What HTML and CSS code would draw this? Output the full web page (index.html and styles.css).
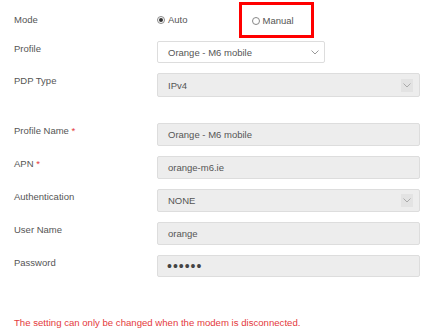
FILE: index.html
```html
<!DOCTYPE html>
<html>
<head>
<meta charset="utf-8">
<link rel="stylesheet" href="styles.css">
</head>
<body>
<div class="form">
  <div class="row mode-row">
    <div class="label">Mode</div>
    <div class="radios">
      <label class="opt"><span class="radio checked"></span>Auto</label>
      <label class="opt manual"><span class="radio"></span>Manual</label>
    </div>
  </div>
  <div class="row">
    <div class="label">Profile</div>
    <div class="select short">
      <span>Orange - M6 mobile</span>
      <svg class="chev" width="8" height="5" viewBox="0 0 8 5"><path d="M0.5 0.5 L4 4 L7.5 0.5" fill="none" stroke="#999" stroke-width="1"/></svg>
    </div>
  </div>
  <div class="row">
    <div class="label">PDP Type</div>
    <div class="select disabled tall">
      <span>IPv4</span>
      <span class="chevbox"><svg width="8" height="5" viewBox="0 0 8 5"><path d="M0.5 0.5 L4 4 L7.5 0.5" fill="none" stroke="#aaa" stroke-width="1"/></svg></span>
    </div>
  </div>
  <div class="row section">
    <div class="label">Profile Name <span class="req">*</span></div>
    <div class="input">Orange - M6 mobile</div>
  </div>
  <div class="row">
    <div class="label">APN <span class="req">*</span></div>
    <div class="input">orange-m6.ie</div>
  </div>
  <div class="row">
    <div class="label">Authentication</div>
    <div class="select disabled">
      <span>NONE</span>
      <span class="chevbox"><svg width="8" height="5" viewBox="0 0 8 5"><path d="M0.5 0.5 L4 4 L7.5 0.5" fill="none" stroke="#aaa" stroke-width="1"/></svg></span>
    </div>
  </div>
  <div class="row">
    <div class="label">User Name</div>
    <div class="input">orange</div>
  </div>
  <div class="row">
    <div class="label">Password</div>
    <div class="input pw short-h">&#8226;&#8226;&#8226;&#8226;&#8226;&#8226;</div>
  </div>
  <p class="note">The setting can only be changed when the modem is disconnected.</p>
</div>
</body>
</html>
```
FILE: styles.css
```css
html, body {
  margin: 0;
  padding: 0;
  background: #fff;
}
body {
  font-family: "Liberation Sans", Arial, sans-serif;
  font-size: 9.5px;
  color: #555;
}
.form {
  display: flex;
  flex-direction: column;
  padding: 3px 7px 0 14px;
}
.row {
  display: flex;
  align-items: flex-start;
  margin-bottom: 10px;
}
.row.tight {
  margin-bottom: 11px;
}
.label {
  width: 143px;
  flex: none;
  line-height: 14px;
  padding-top: 1px;
  color: #555;
}
.req {
  color: #e4393c;
}
.mode-row {
  height: 36px;
  align-items: center;
  margin-bottom: 2px;
}
.mode-row .label {
  padding-top: 0;
  margin-top: -3px;
}
.radios {
  display: flex;
  align-items: center;
  margin-top: -3px;
}
.opt {
  display: flex;
  align-items: center;
  color: #555;
  line-height: 14px;
}
.radio {
  width: 8px;
  height: 8px;
  border: 1px solid #888;
  border-radius: 50%;
  box-sizing: border-box;
  margin-right: 3px;
  background: #fff;
  position: relative;
}
.radio.checked::after {
  content: "";
  position: absolute;
  left: 1px;
  top: 1px;
  width: 4px;
  height: 4px;
  border-radius: 50%;
  background: #333;
}
.manual {
  margin-left: 51px;
  border: 3px solid #f00;
  height: 36px;
  box-sizing: border-box;
  padding: 3px 17px 0 10px;
}
.select, .input {
  box-sizing: border-box;
  height: 23px;
  border: 1px solid #ddd;
  border-radius: 2px;
  display: flex;
  align-items: center;
  justify-content: space-between;
  padding: 0 6px 0 10px;
  color: #555;
  flex: none;
  width: 263px;
}
.select.short {
  width: 168px;
  height: 22px;
  background: #fff;
  padding-right: 5px;
}
.select.tall {
  height: 24px;
}
.short-h {
  height: 22px;
}
.disabled, .input {
  background: #ededed;
}
.chevbox {
  width: 12px;
  height: 13px;
  background: #e3e3e3;
  display: flex;
  align-items: center;
  justify-content: center;
}
.section {
  margin-top: 16px;
}
.pw {
  letter-spacing: 1px;
  font-size: 14px;
  color: #444;
  padding-left: 9px;
}
.note {
  margin: 30px 0 0 0;
  color: #e4393c;
  font-size: 9.6px;
}
```
